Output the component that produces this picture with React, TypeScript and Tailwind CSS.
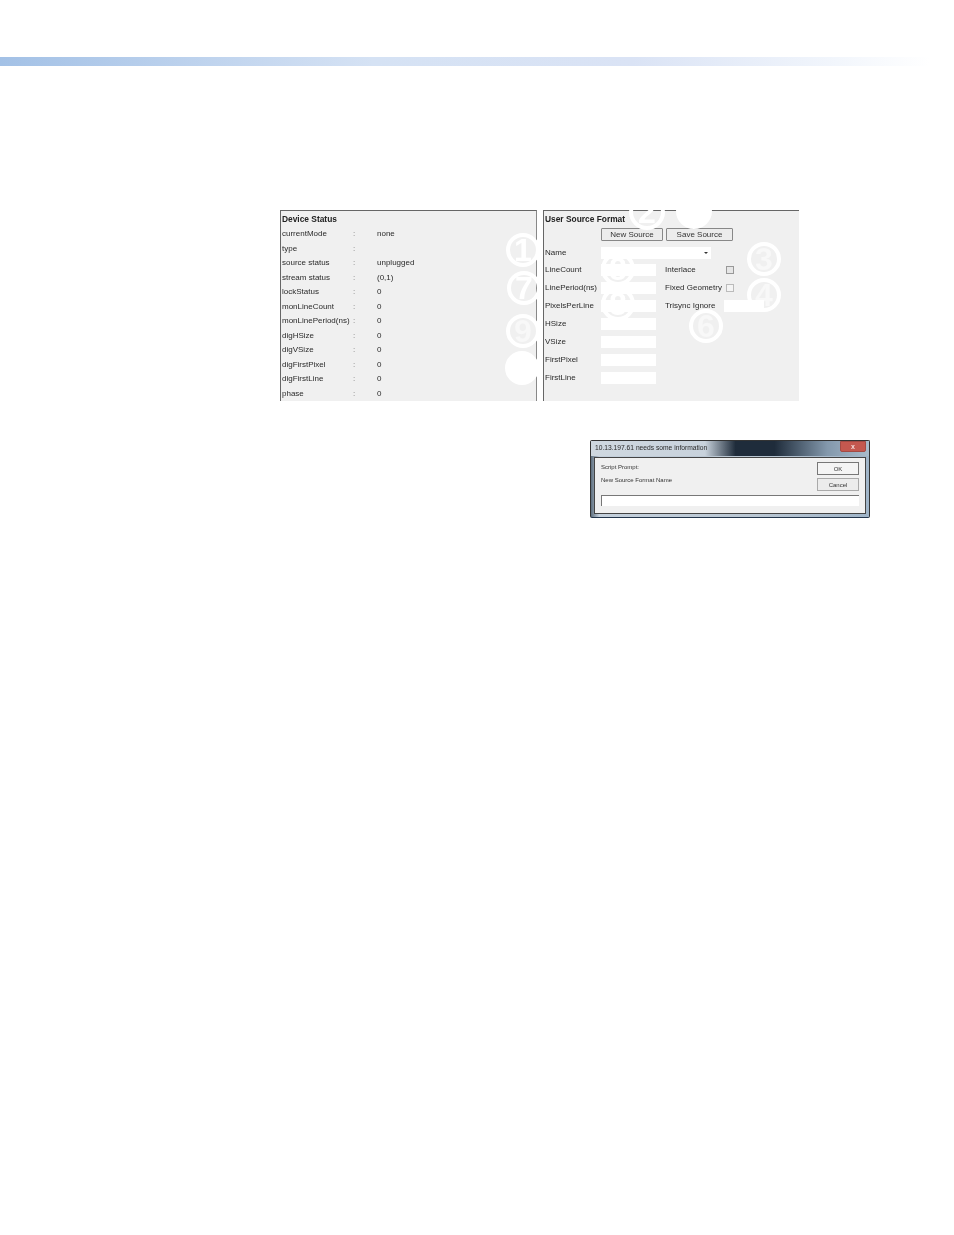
const statusRows: [string, string][] = [
  ["currentMode", "none"],
  ["type", ""],
  ["source status", "unplugged"],
  ["stream status", "(0,1)"],
  ["lockStatus", "0"],
  ["monLineCount", "0"],
  ["monLinePeriod(ns)", "0"],
  ["digHSize", "0"],
  ["digVSize", "0"],
  ["digFirstPixel", "0"],
  ["digFirstLine", "0"],
  ["phase", "0"],
];

const formRows = ["LineCount", "LinePeriod(ns)", "PixelsPerLine", "HSize", "VSize", "FirstPixel", "FirstLine"];

function Callout({ x, y, r, label, filled, faint }: { x: number; y: number; r: number; label?: string; filled?: boolean; faint?: boolean }) {
  return (
    <div
      className={`absolute flex items-center justify-center rounded-full border-[4px] border-white font-bold text-[32px] leading-none ${filled ? "bg-white" : ""} ${faint ? "text-white/50" : "text-white"}`}
      style={{ left: x - r, top: y - r, width: r * 2, height: r * 2 }}
    >
      {label}
    </div>
  );
}

function Field() {
  return <div className="w-[55px] h-[12px] bg-white" />;
}

export default function App() {
  return (
    <div className="relative w-[954px] h-[1235px] bg-white overflow-hidden font-['Liberation_Sans',Arial,sans-serif]">
      <div className="pt-[57px]">
        <div className="h-[9px] w-[930px] bg-[linear-gradient(90deg,#a3c1e6,#d5e2f4_40%,#dae3f5_68%,#f2f6fc_90%,#ffffff)]" />
      </div>

      <div className="mt-[144px] ml-[280px] flex gap-[6px] text-[8px] text-[#2a2a2a] blur-[0.3px]">
        <section className="w-[257px] h-[191px] bg-[#f0f0f0] border-t border-l border-r border-t-[#666] border-l-[#666] border-r-[#888] pl-[1px] pt-[2px]">
          <h2 className="h-[13px] text-[8.4px] font-bold text-[#222] leading-[13px]">Device Status</h2>
          <div className="flex flex-col mt-[1px]">
            {statusRows.map(([k, v]) => (
              <div key={k} className="flex items-center leading-none h-[14.5px]">
                <span className="w-[71px] whitespace-nowrap">{k}</span>
                <span className="w-[24px] text-[#777]">:</span>
                <span>{v}</span>
              </div>
            ))}
          </div>
        </section>

        <section className="w-[256px] h-[191px] bg-[#f0f0f0] border-t border-l border-[#666] pl-[1px] pt-[2px]">
          <h2 className="h-[13px] text-[8.4px] font-bold text-[#222] leading-[13px]">User Source Format</h2>
          <div className="flex gap-[3px] ml-[56px] mt-[2px]">
            <button className="w-[62px] h-[13px] bg-[#ececec] border border-[#888] rounded-[1px] leading-none text-[#333] text-[8px]">New Source</button>
            <button className="w-[67px] h-[13px] bg-[#ececec] border border-[#888] rounded-[1px] leading-none text-[#333] text-[8px]">Save Source</button>
          </div>
          <div className="flex items-center h-[13px] mt-[5px]">
            <span className="w-[56px]">Name</span>
            <div className="relative w-[110px] h-[12px] bg-white">
              <span className="absolute right-[3px] top-[5px] w-0 h-0 border-x-[2px] border-t-[2px] border-x-transparent border-t-[#333]" />
            </div>
          </div>
          <div className="flex mt-[2px]">
            <div className="flex flex-col w-[120px]">
              {formRows.map((r) => (
                <div key={r} className="flex items-center h-[18px]">
                  <span className="w-[56px] shrink-0 whitespace-nowrap">{r}</span>
                  <Field />
                </div>
              ))}
            </div>
            <div className="flex flex-col">
              <div className="flex items-center h-[18px]">
                <span className="w-[61px]">Interlace</span>
                <span className="w-[8px] h-[8px] border border-[#999] bg-[#e6e6e6]" />
              </div>
              <div className="flex items-center h-[18px]">
                <span className="w-[61px] whitespace-nowrap">Fixed Geometry</span>
                <span className="w-[8px] h-[8px] border border-[#bbb] bg-[#f4f4f4]" />
              </div>
              <div className="flex items-center h-[18px]">
                <span className="w-[59px] whitespace-nowrap">Trisync Ignore</span>
                <span className="w-[40px] h-[12px] bg-white" />
              </div>
            </div>
          </div>
        </section>
      </div>

      <div className="mt-[39px] ml-[590px] w-[280px] h-[78px] rounded-[2px] border border-[#333] border-b-[#22344a] bg-[linear-gradient(90deg,#5f7080,#c4d0dc_3%,#b9c6d2_60%,#9fb4c8)] px-[3px] blur-[0.3px]">
        <div className="relative flex items-center h-[15px] -mx-[3px] px-[4px] bg-[linear-gradient(90deg,#cfd8e0,#c8d2dc_41%,#1f2c3b_52%,#1f2c3b_66%,#8398ac_85%,#a9bccc)]">
          <span className="text-[6.7px] text-[#2a2a2a]">10.13.197.61 needs some information</span>
          <span className="absolute right-[3px] top-0 w-[26px] h-[11px] bg-[#c4584f] border border-[#a34a44] rounded-b-[2px] flex items-center justify-center text-[#f3dcda] font-bold text-[7px] leading-none">x</span>
        </div>
        <div className="h-[57px] mt-[1px] bg-[#f0f0f0] border border-[#444] flex flex-col px-[6px] pt-[4px] text-[6px] text-[#333]">
          <div className="flex justify-between items-start h-[33px]">
            <div className="flex flex-col gap-[4px] pt-[1px]">
              <span>Script Prompt:</span>
              <span>New Source Format Name</span>
            </div>
            <div className="flex flex-col gap-[3px]">
              <button className="w-[42px] h-[13px] bg-[#f4f4f4] border border-[#777] leading-none text-[6px]">OK</button>
              <button className="w-[42px] h-[13px] bg-[#ececec] border border-[#aaa] leading-none text-[6px]">Cancel</button>
            </div>
          </div>
          <div className="h-[11px] bg-white border-t border-l border-[#777]" />
        </div>
      </div>

      <div className="absolute inset-0 pointer-events-none blur-[0.4px]">
        <Callout x={523} y={250} r={17} label="1" />
        <Callout x={524} y={288} r={17} label="7" />
        <Callout x={523} y={331} r={17} label="9" faint />
        <Callout x={522} y={368} r={17} filled />
        <Callout x={647} y={212} r={18} label="2" />
        <Callout x={694} y={211} r={18} filled />
        <Callout x={618} y={269} r={17} label="8" />
        <Callout x={618} y={304} r={17} label="8" />
        <Callout x={764} y={259} r={17} label="3" faint />
        <Callout x={764} y={295} r={17} label="4" faint />
        <Callout x={706} y={326} r={17} label="6" faint />
      </div>
    </div>
  );
}
